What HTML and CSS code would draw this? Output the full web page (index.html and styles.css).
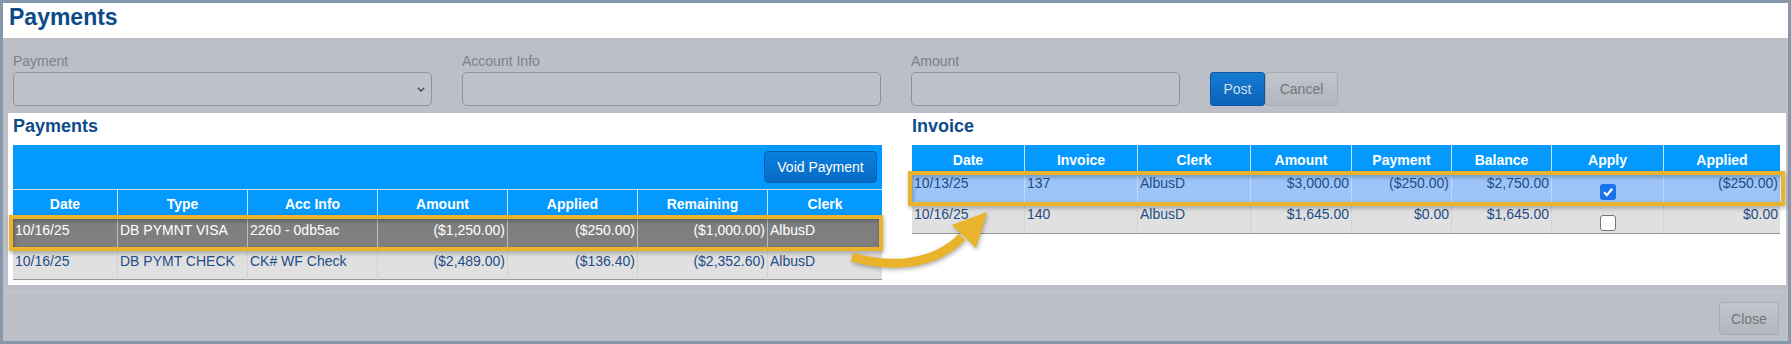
FILE: index.html
```html
<!DOCTYPE html>
<html lang="en">
<head>
    <meta charset="utf-8">
    <title>Payments</title>
    <link rel="stylesheet" href="styles.css">
</head>
<body>
    <div class="modal">
        <div class="modal-title">
            <h1>Payments</h1>
        </div>
        <div class="modal-body">
            <div class="form-row">
                <div class="field field--wide">
                    <label>Payment</label>
                    <div class="select">
                        <svg width="8" height="5" viewBox="0 0 8 5"><path d="M0.8 0.8 L4 4 L7.2 0.8" fill="none" stroke="#4b4e56" stroke-width="1.5"/></svg>
                    </div>
                </div>
                <div class="field field--wide">
                    <label>Account Info</label>
                    <div class="input"></div>
                </div>
                <div class="field field--narrow">
                    <label>Amount</label>
                    <div class="input"></div>
                </div>
                <div class="form-actions">
                    <button class="btn btn--post">Post</button>
                    <button class="btn btn--grey btn--cancel">Cancel</button>
                </div>
            </div>

            <div class="panel">
                <div class="section section--payments">
                    <h2>Payments</h2>
                    <div class="toolbar">
                        <button class="btn-void">Void Payment</button>
                    </div>
                    <table class="grid grid--payments">
                        <colgroup>
                            <col style="width:104px"><col style="width:130px"><col style="width:130px"><col style="width:130px"><col style="width:130px"><col style="width:130px"><col style="width:115px">
                        </colgroup>
                        <tr class="head">
                            <th>Date</th><th>Type</th><th>Acc Info</th><th>Amount</th><th>Applied</th><th>Remaining</th><th>Clerk</th>
                        </tr>
                        <tr class="row row--selected">
                            <td>10/16/25</td><td>DB PYMNT VISA</td><td>2260 - 0db5ac</td><td class="num">($1,250.00)</td><td class="num">($250.00)</td><td class="num">($1,000.00)</td><td>AlbusD</td>
                        </tr>
                        <tr class="row row--last">
                            <td>10/16/25</td><td>DB PYMT CHECK</td><td>CK# WF Check</td><td class="num">($2,489.00)</td><td class="num">($136.40)</td><td class="num">($2,352.60)</td><td>AlbusD</td>
                        </tr>
                    </table>
                </div>

                <div class="section section--invoice">
                    <h2>Invoice</h2>
                    <table class="grid grid--invoice">
                        <colgroup>
                            <col style="width:112px"><col style="width:113px"><col style="width:113px"><col style="width:101px"><col style="width:100px"><col style="width:100px"><col style="width:112px"><col style="width:117px">
                        </colgroup>
                        <tr class="head">
                            <th>Date</th><th>Invoice</th><th>Clerk</th><th>Amount</th><th>Payment</th><th>Balance</th><th>Apply</th><th>Applied</th>
                        </tr>
                        <tr class="row row--current">
                            <td>10/13/25</td><td>137</td><td>AlbusD</td><td class="num">$3,000.00</td><td class="num">($250.00)</td><td class="num">$2,750.00</td>
                            <td class="apply"><span class="check check--on"><svg width="16" height="16" viewBox="0 0 16 16"><path d="M4 8.3 L6.9 11.2 L12.2 4.8" fill="none" stroke="#fff" stroke-width="2.2"/></svg></span></td>
                            <td class="num">($250.00)</td>
                        </tr>
                        <tr class="row row--last">
                            <td>10/16/25</td><td>140</td><td>AlbusD</td><td class="num">$1,645.00</td><td class="num">$0.00</td><td class="num">$1,645.00</td>
                            <td class="apply"><span class="check check--off"></span></td>
                            <td class="num">$0.00</td>
                        </tr>
                    </table>
                </div>
            </div>

            <div class="modal-footer">
                <button class="btn btn--grey btn--close">Close</button>
            </div>
        </div>
    </div>

    <!-- callout drawn over the screenshot -->
    <svg class="callout" width="1791" height="344" viewBox="0 0 1791 344">
        <g class="callout-shadow" fill="none" stroke="#e9b32b" stroke-width="4">
            <rect x="11" y="217" width="870" height="32"/>
            <rect x="910" y="173" width="873" height="31"/>
        </g>
        <g class="callout-shadow">
            <path d="M852 257 C886 267 932 268 962 237" fill="none" stroke="#e9b32b" stroke-width="9"/>
            <polygon points="987,212 952,225 976,248" fill="#e9b32b"/>
        </g>
    </svg>
</body>
</html>
```

FILE: styles.css
```css
body {
    margin: 0;
    font-family: "Liberation Sans", Arial, sans-serif;
    background: #ffffff;
}

.modal {
    box-sizing: border-box;
    width: 1791px;
    height: 344px;
    border: 3px solid #8597ab;
    display: flex;
    flex-direction: column;
}

.modal-title {
    height: 35px;
    padding-left: 6px;
    background: #ffffff;
}

.modal-title h1 {
    margin: 0;
    font-size: 23px;
    line-height: 29px;
    color: #0c4a8a;
}

.modal-body {
    flex: 1;
    background: #bcbfc7;
}

/* top form */
.form-row {
    display: flex;
    align-items: flex-end;
    padding: 15px 0 7px 10px;
}

.field {
    margin-right: 30px;
}

.field--wide {
    width: 419px;
}

.field--narrow {
    width: 269px;
}

.field label {
    display: block;
    margin-bottom: 3px;
    font-size: 14px;
    line-height: 16px;
    color: #7d8189;
}

.input,
.select {
    box-sizing: border-box;
    height: 34px;
    border: 1px solid #8e929a;
    border-radius: 5px;
    background: #bfc2c9;
}

.select {
    display: flex;
    align-items: center;
    justify-content: flex-end;
    padding-right: 6px;
}

.form-actions {
    display: flex;
}

.btn {
    box-sizing: border-box;
    height: 34px;
    padding: 0;
    border-radius: 3px;
    font: 14px "Liberation Sans", Arial, sans-serif;
}

.btn--post {
    width: 55px;
    background: linear-gradient(#177bd2, #0a64ba);
    border: 1px solid #0a58a3;
    color: #d3deec;
}

.btn--grey {
    background: linear-gradient(#c2c5cc, #b3b6bd);
    border: 1px solid #a8abb2;
    color: #72767e;
}

.btn--cancel {
    width: 73px;
}

.btn--close {
    width: 60px;
    height: 33px;
}

/* white panel with both tables */
.panel {
    display: flex;
    gap: 30px;
    margin: 0 2px 0 5px;
    padding: 0 5px 5px;
    background: #ffffff;
}

.section--payments {
    width: 869px;
}

.section--invoice {
    width: 868px;
}

.section h2 {
    box-sizing: border-box;
    height: 32px;
    margin: 0;
    padding-top: 2px;
    font-size: 18px;
    line-height: 22px;
    color: #0f4b89;
}

.toolbar {
    height: 44px;
    display: flex;
    align-items: center;
    justify-content: flex-end;
    padding-right: 5px;
    background: #0399fe;
}

.btn-void {
    box-sizing: border-box;
    width: 113px;
    height: 32px;
    padding: 0;
    border: 1px solid #0560b2;
    border-radius: 4px;
    background: linear-gradient(#0a80dd, #066bc5);
    color: #ffffff;
    font: 14px "Liberation Sans", Arial, sans-serif;
}

.grid {
    width: 100%;
    table-layout: fixed;
    border-collapse: separate;
    border-spacing: 0;
    font-size: 14px;
    line-height: 16px;
}

.grid th {
    padding: 7px 0 0;
    vertical-align: top;
    text-align: center;
    font-weight: bold;
    color: #ffffff;
    background: #0399fe;
    border-left: 1px solid #c9e3f6;
}

.grid td {
    padding: 6px 2px 0;
    vertical-align: top;
    white-space: nowrap;
    overflow: hidden;
    border-left: 1px solid #d2d2d2;
}

.grid th:first-child,
.grid td:first-child {
    border-left: none;
}

.grid--payments th {
    padding-top: 6px;
    border-top: 1px solid #c9e3f6;
}

.grid--invoice td {
    padding-top: 4px;
}

.grid .head {
    height: 27px;
}

.grid--invoice .head {
    height: 26px;
}

.row {
    height: 31px;
    background: #e0e0e0;
    color: #1e4d88;
}

.row--last td {
    border-bottom: 1px solid #979797;
}

.grid--payments .row--last {
    height: 33px;
}

.grid--invoice .row--last {
    height: 32px;
}

.row--selected {
    background: #7f7f7f;
    color: #ffffff;
}

.row--selected td {
    border-left-color: #bdbdbd;
}

.row--current {
    background: #9ec5f8;
}

.row--current td {
    border-left-color: #c4daf5;
}

.num {
    text-align: right;
}

.grid--invoice td.apply {
    padding-top: 13px;
}

.check {
    box-sizing: border-box;
    display: block;
    width: 16px;
    height: 16px;
    margin: 0 auto;
    border-radius: 3px;
}

.check svg {
    display: block;
}

.check--on {
    background: #1a73e8;
}

.check--off {
    background: #ffffff;
    border: 1px solid #767676;
}

.modal-footer {
    display: flex;
    justify-content: flex-end;
    margin-top: 7px;
    padding: 9px 9px 0 0;
    border-top: 1px solid #c5c8cf;
}

.callout {
    position: absolute;
    left: 0;
    top: 0;
    pointer-events: none;
}

.callout-shadow {
    filter: drop-shadow(1px 2px 2px rgba(0, 0, 0, 0.3));
}
```
